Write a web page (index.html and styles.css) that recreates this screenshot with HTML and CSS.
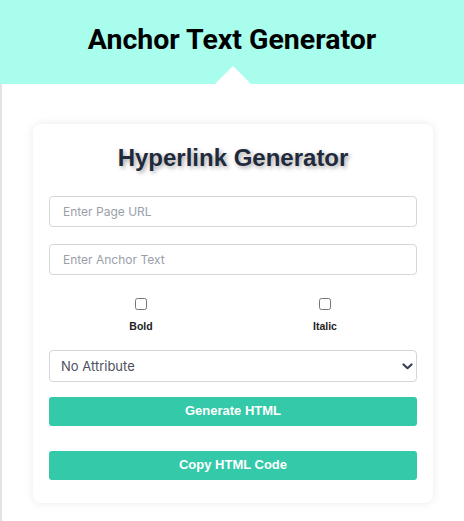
FILE: index.html
```html
<!DOCTYPE html>
<html>
<head>
<meta charset="utf-8">
<link rel="stylesheet" href="styles.css">
</head>
<body>
<header class="top">
  <h1 class="top-title">Anchor Text Generator</h1>
  <span class="notch"></span>
</header>
<main class="page">
  <section class="card">
    <h2 class="card-title">Hyperlink Generator</h2>
    <input class="field" type="text" placeholder="Enter Page URL">
    <input class="field field-second" type="text" placeholder="Enter Anchor Text">
    <div class="opts">
      <label class="opt"><input class="check" type="checkbox"><span class="opt-label">Bold</span></label>
      <label class="opt"><input class="check" type="checkbox"><span class="opt-label">Italic</span></label>
    </div>
    <div class="select-wrap">
      <select class="select">
        <option>No Attribute</option>
        <option>nofollow</option>
        <option>noopener</option>
      </select>
      <svg class="chev" width="11" height="7" viewBox="0 0 11 7"><path d="M1.5 1.5 L5.5 5.2 L9.5 1.5" fill="none" stroke="#3a4252" stroke-width="2.2" stroke-linecap="round" stroke-linejoin="round"/></svg>
    </div>
    <button class="btn btn-gen">Generate HTML</button>
    <button class="btn btn-copy">Copy HTML Code</button>
  </section>
</main>
</body>
</html>
```
FILE: styles.css
```css
html, body {
  margin: 0;
  padding: 0;
  background: #ffffff;
}
body {
  font-family: "Liberation Sans", Arial, sans-serif;
}
.top {
  position: relative;
  height: 84px;
  background: #a8fdec;
  display: flex;
  align-items: center;
  justify-content: center;
}
.top-title {
  margin: 0;
  margin-top: -5px;
  font-family: Roboto, "Liberation Sans", sans-serif;
  font-weight: 700;
  font-size: 28.5px;
  color: #000;
}
.notch {
  position: absolute;
  left: 215px;
  bottom: 0;
  width: 0;
  height: 0;
  border-left: 18px solid transparent;
  border-right: 18px solid transparent;
  border-bottom: 18px solid #ffffff;
}
.page {
  border-left: 2px solid #e2e2e2;
  padding: 40px 31px 18px 31px;
  min-height: 400px;
}
.card {
  background: #fff;
  border-radius: 8px;
  box-shadow: 0 0 10px rgba(0, 0, 0, 0.09);
  padding: 20px 16px 23px 16px;
  display: flex;
  flex-direction: column;
}
.card-title {
  margin: 0 0 25px 0;
  text-align: center;
  font-family: "Liberation Sans", Arial, sans-serif;
  font-weight: 700;
  font-size: 24px;
  line-height: 27px;
  color: #1f2a3c;
  text-shadow: 2px 2px 4px rgba(0, 0, 0, 0.35);
}
.field {
  box-sizing: border-box;
  height: 31px;
  width: 100%;
  margin: 0;
  border: 1px solid #d4d6dc;
  border-radius: 4px;
  padding: 0 13px;
  font-family: Inter, "Noto Sans", sans-serif;
  font-size: 12px;
  color: #333;
  background: #fff;
  outline: none;
}
.field::placeholder {
  color: #9aa0aa;
}
.field-second {
  margin-top: 17px;
}
.opts {
  display: grid;
  grid-template-columns: 1fr 1fr;
  margin-top: 23px;
}
.opt {
  display: flex;
  flex-direction: column;
  align-items: center;
}
.check {
  width: 12px;
  height: 12px;
  margin: 0;
}
.opt-label {
  margin-top: 9px;
  font-family: "Liberation Sans", Arial, sans-serif;
  font-size: 10.5px;
  font-weight: 700;
  line-height: 14px;
  color: #222;
}
.select-wrap {
  position: relative;
  margin-top: 17px;
}
.select {
  -webkit-appearance: none;
  appearance: none;
  box-sizing: border-box;
  width: 100%;
  height: 32px;
  margin: 0;
  border: 1px solid #d4d6dc;
  border-radius: 4px;
  padding: 0 11px;
  font-family: Inter, "Noto Sans", sans-serif;
  font-size: 13px;
  color: #4b5160;
  background: #fff;
  outline: none;
}
.chev {
  position: absolute;
  right: 4px;
  top: 13px;
  pointer-events: none;
}
.btn {
  box-sizing: border-box;
  width: 100%;
  height: 29px;
  margin: 0;
  border: none;
  border-radius: 3px;
  background: #33c9a9;
  color: #fff;
  font-family: "Liberation Sans", Arial, sans-serif;
  font-weight: 700;
  font-size: 13px;
  padding: 0;
  padding-bottom: 2px;
}
.btn-gen {
  margin-top: 15px;
}
.btn-copy {
  margin-top: 25px;
}
```
